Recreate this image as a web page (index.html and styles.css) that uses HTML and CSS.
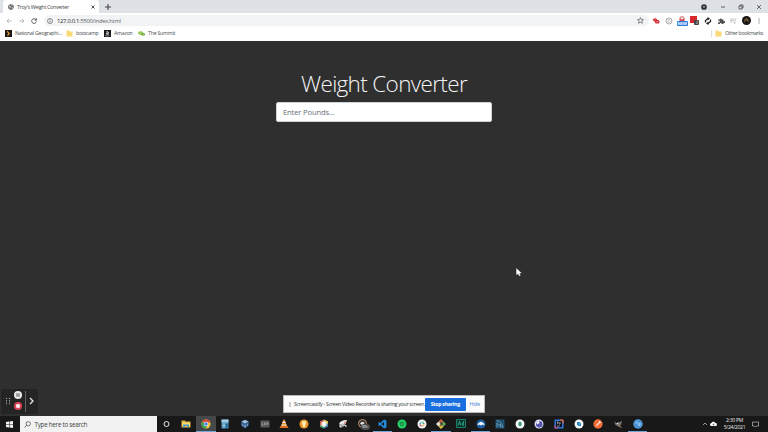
FILE: index.html
```html
<!DOCTYPE html>
<html lang="en">
<head>
<meta charset="utf-8">
<title>Troy's Weight Converter</title>
<link rel="stylesheet" href="styles.css">
</head>
<body>
<div class="screen">
  <header class="tabstrip">
    <div class="tab">
      <svg class="i6" viewBox="0 0 12 12"><circle cx="6" cy="6" r="5.6" fill="#505458"/><path d="M2 3l3 1 1 2-2 1v3M7 1l0 2 3 1M7 7l3 0-1 3z" fill="#d8dadc" stroke="#d8dadc" stroke-width=".8"/></svg>
      <span class="tab-title">Troy's Weight Converter</span>
      <svg class="i4" viewBox="0 0 8 8"><path d="M1 1l6 6M7 1L1 7" stroke="#333" stroke-width="1.7"/></svg>
    </div>
    <svg class="plus" viewBox="0 0 10 10"><path d="M5 0v10M0 5h10" stroke="#44474a" stroke-width="1.8"/></svg>
    <div class="window-buttons">
      <svg class="i6" viewBox="0 0 12 12"><circle cx="6" cy="6" r="5.7" fill="#303336"/><path d="M3.5 5h5L6 8z" fill="#dee1e6"/></svg>
      <svg class="i6" viewBox="0 0 12 12"><path d="M2 6h8" stroke="#333" stroke-width="1.5"/></svg>
      <svg class="i6" viewBox="0 0 12 12"><path d="M2 4h6v6H2zM4 4V2h6v6H8" fill="none" stroke="#333" stroke-width="1.4"/></svg>
      <svg class="i6" viewBox="0 0 12 12"><path d="M2 2l8 8M10 2l-8 8" stroke="#333" stroke-width="1.4"/></svg>
    </div>
  </header>
  <nav class="toolbar">
    <div class="nav-buttons">
      <svg class="i6" viewBox="0 0 12 12"><path d="M11 6H2M6 2L2 6l4 4" fill="none" stroke="#a0a2a4" stroke-width="1.4"/></svg>
      <svg class="i6" viewBox="0 0 12 12"><path d="M1 6h9M6 2l4 4-4 4" fill="none" stroke="#a0a2a4" stroke-width="1.4"/></svg>
      <svg class="i6" viewBox="0 0 12 12"><path d="M10 3.5A4.7 4.7 0 1 0 10.7 7" fill="none" stroke="#44474a" stroke-width="1.7"/><path d="M11.5 0v5h-5z" fill="#44474a"/></svg>
    </div>
    <div class="address">
      <svg class="i6" viewBox="0 0 12 12"><circle cx="6" cy="6" r="5" fill="none" stroke="#55585c" stroke-width="1.3"/><path d="M6 5.2V9M6 2.8v1.4" stroke="#55585c" stroke-width="1.4"/></svg>
      <span class="url"><b>127.0.0.1</b>:5500/index.html</span>
      <svg class="star" viewBox="0 0 12 12"><path d="M6 1l1.5 3.3 3.6.4-2.7 2.4.8 3.6L6 8.9l-3.2 1.8.8-3.6L.9 4.7l3.6-.4z" fill="none" stroke="#55585c" stroke-width="1.2"/></svg>
    </div>
    <div class="extensions">
      <svg viewBox="0 0 16 16"><path d="M1 5l5-3 4 2v5l-4 1-3-2z" fill="#d9484e"/><rect x="6" y="6" width="9" height="7" rx="3" fill="#d9252c"/><path d="M9 9.500h3" stroke="#fff" stroke-width="1.500"/></svg>
      <svg viewBox="0 0 16 16"><circle cx="8" cy="8" r="6" fill="none" stroke="#85888b" stroke-width="1.4"/><path d="M7 5H6v6h1M9 5h1v6H9" fill="none" stroke="#85888b"/></svg>
      <span class="ext-new"><svg viewBox="0 0 16 12"><path d="M2 4h12v8H2z" fill="#d9444b"/><path d="M5 4V1h6v3" fill="none" stroke="#b66" stroke-width="1.5"/><path d="M5 5h6v3H5z" fill="#fff"/></svg><i>NEW</i></span>
      <span class="ext-red"><i>2</i></span>
      <svg viewBox="0 0 16 16"><path d="M3 11V7l5-4M13 5v4l-5 4" fill="none" stroke="#222" stroke-width="2.600"/><path d="M7 0l5 3-5 4zM9 9l-5 4 5 3z" fill="#222"/></svg>
      <svg viewBox="0 0 16 16"><path d="M2 5h3.5a2 2 0 1 1 4 0H13v3.5a2 2 0 1 1 0 3V14H9.500a2 2 0 1 0-4 0H2v-3.500a2 2 0 1 0 0-3z" fill="#4d5053"/></svg>
      <svg viewBox="0 0 16 16"><path d="M2 4h8M2 7h8M2 10h5M12 12V4h3" fill="none" stroke="#b4b7ba" stroke-width="1.5"/><circle cx="11" cy="12" r="1.6" fill="#b4b7ba"/></svg>
      <svg class="avatar" viewBox="0 0 18 18"><circle cx="9" cy="9" r="9" fill="#171614"/><path d="M5 14V7l4-3 4 3v7l-2-4H7z" fill="#876642"/><path d="M7 8h4" stroke="#241b15" stroke-width="2"/></svg>
      <svg viewBox="0 0 16 16"><path d="M8 3v2M8 7v2M8 11v2" stroke="#55585c" stroke-width="2"/></svg>
    </div>
  </nav>
  <nav class="bookmarks">
    <span class="bm bm-geo"><svg viewBox="0 0 14 14"><path d="M0 0h14v14H0z" fill="#1c1917"/><path d="M4 1l6 6-5 6V9l2-2-3-3z" fill="#e9a23a"/></svg><span>National Geographi...</span></span>
    <span class="bm bm-boot"><svg viewBox="0 0 14 14"><path d="M1 1h5l1 2h6v10H1z" fill="#fbd976"/></svg><span>bootcamp</span></span>
    <span class="bm bm-amz"><svg viewBox="0 0 14 14"><path d="M0 0h14v14H0z" fill="#17191d"/><path d="M4.500 4q3-2 4 0v5M8 6q-4 0-3.500 2T8 8" fill="none" stroke="#fff" stroke-width="1.6"/><path d="M2 11q5 2 9 0" fill="none" stroke="#ddd"/></svg><span>Amazon</span></span>
    <span class="bm bm-sum"><svg viewBox="0 0 14 14"><ellipse cx="5" cy="6" rx="5" ry="3.600" fill="#8ac249"/><ellipse cx="10" cy="8.500" rx="4" ry="3" fill="#6dac35"/><path d="M3 6h4M9 9h3" stroke="#e4f4d4"/></svg><span>The Summit</span></span>
    <span class="bm bm-other"><svg viewBox="0 0 14 14"><path d="M1 1h5l1 2h6v10H1z" fill="#fbd976"/></svg><span>Other bookmarks</span></span>
  </nav>

  <main class="page">
    <h1>Weight Converter</h1>
    <input class="pounds" type="text" placeholder="Enter Pounds...">
    <div class="recorder">
      <svg class="grip" viewBox="0 0 4 7"><path d="M.5 0v7M3.500 0v7" stroke="#bbb" stroke-dasharray="1 1.200"/></svg>
      <div class="rec-buttons">
        <svg viewBox="0 0 16 16"><circle cx="8" cy="8" r="8" fill="#e9e9e9"/><path d="M6 4.500v7M10 4.500v7" stroke="#444" stroke-width="1.800"/></svg>
        <svg viewBox="0 0 16 16"><circle cx="8" cy="8" r="8" fill="#d64550"/><rect x="4.500" y="4.500" width="7" height="7" fill="#fff"/></svg>
      </div>
      <svg class="rec-next" viewBox="0 0 5 8"><path d="M1 1l3 3-3 3" fill="none" stroke="#e4e4e4" stroke-width="1.300"/></svg>
    </div>
    <div class="share">
      <i class="share-grip"></i>
      <span class="share-text">Screencastify - Screen Video Recorder is sharing your screen.</span>
      <button>Stop sharing</button>
      <a>Hide</a>
    </div>
    <svg class="cursor" viewBox="0 0 6 9"><path d="M.5.5v6.300l1.600-1.400 1 2.400 1.200-.5-1-2.300h2z" fill="#fff" stroke="#fff" stroke-width=".3"/></svg>
  </main>

  <footer class="taskbar">
    <div class="start"><svg viewBox="0 0 14 14"><path d="M0 2l6-1v5.500H0zM7 .9L14 0v6.500H7zM0 7.500h6V13l-6-1zM7 7.500h7V14l-7-.9z" fill="#f2f2f2"/></svg></div>
    <div class="search"><svg viewBox="0 0 14 14"><circle cx="8.500" cy="5.500" r="4.300" fill="none" stroke="#333" stroke-width="1.300"/><path d="M5.500 8.500L1 13" stroke="#333" stroke-width="1.300"/></svg><span>Type here to search</span></div>
    <div class="apps">
      <span><svg viewBox="0 0 20 20"><circle cx="9" cy="10" r="5" fill="none" stroke="#e8e8e8" stroke-width="2"/></svg></span>
      <span><svg viewBox="0 0 20 20"><path d="M1 3h7l1 2h10v12H1z" fill="#e7b13d"/><path d="M2 7h16v7H2z" fill="#fbd96e"/><path d="M4 17v-6h12v6h-3v-3H7v3z" fill="#4497cf"/></svg></span>
      <span class="active open"><svg viewBox="0 0 20 20"><circle cx="10" cy="10" r="9" fill="#f4c63c"/><path d="M10 10L2 6a9 9 0 0 1 16 0z" fill="#dc473b"/><path d="M10 10L2 6a9 9 0 0 0 7 13l4-7z" fill="#35a257"/><circle cx="10" cy="10" r="4.500" fill="#fff"/><circle cx="10" cy="10" r="3.500" fill="#477fe1"/></svg></span>
      <span><svg viewBox="0 0 20 20"><path d="M3 1h14v18H3z" fill="#478dbb"/><path d="M3 1h14v6H3z" fill="#a3cbe1"/><path d="M5 10h5M5 13h5M5 16h5" stroke="#cae1ed" stroke-width="1.500"/><path d="M12 10h3v7h-3z" fill="#246391"/></svg></span>
      <span><svg viewBox="0 0 20 20"><path d="M2 5l8-4 8 4v8l-8 6-8-6z" fill="#274e80"/><path d="M3 5l7 4 7-4-7-3z" fill="#a9c3de"/><path d="M10 9v9M5 9v4l5 2 5-2V9" fill="none" stroke="#8fb0d2" stroke-width="1.600"/></svg></span>
      <span><svg viewBox="0 0 20 20"><path d="M1 3h18v14H1z" fill="#595959"/><path d="M4 7v5h3M9 7v5M12 12V8h4v4" fill="none" stroke="#b8b8b8" stroke-width="1.300"/></svg></span>
      <span><svg viewBox="0 0 20 20"><path d="M9 1h2l5 13H4z" fill="#ed8f2b"/><path d="M7.500 5h5l1 3h-7zM5.500 11h9l1 2h-11z" fill="#eee"/><path d="M3 14h14l2 4H1z" fill="#dc711d"/></svg></span>
      <span><svg viewBox="0 0 20 20"><circle cx="10" cy="10" r="9" fill="#eb982c"/><circle cx="10" cy="8" r="4.500" fill="#ffe6a9"/><path d="M8 12h4v4H8z" fill="#fff0c9"/></svg></span>
      <span><svg viewBox="0 0 20 20"><path d="M10 1l8 4v10l-8 4-8-4V5z" fill="#4a86b8"/><path d="M2 5l8-4v5L6 9v8l-4-2z" fill="#d75a50"/><path d="M10 1l8 4v5l-8-4z" fill="#e3c44d"/><path d="M2 12l8 3v4l-8-4z" fill="#4aa868"/><path d="M10 4l5 3v6l-5 3-5-3V7z" fill="#f2f2ee"/></svg></span>
      <span><svg viewBox="0 0 20 20"><path d="M2 10Q5 2 18 2l-3 8-6 2z" fill="#eee"/><path d="M2 11l7-2 5 2-4 5z" fill="#b7bcc2"/><path d="M11 8l5-3-2 5z" fill="#d45350"/><path d="M3 13l4 4M13 12l4 3" stroke="#f3f3f3" stroke-width="2.500"/></svg></span>
      <span class="badged"><svg viewBox="0 0 20 20"><circle cx="9" cy="9" r="8" fill="#3b302a" stroke="#b79278" stroke-width="2"/><path d="M4 9q4-6 9-1l-3 6z" fill="#ddd"/></svg><i>99+</i></span>
      <span class="open"><svg viewBox="0 0 20 20"><path d="M14 1l5 2v14l-5 2L2 8l2-2 10 8V6L4 14l-2-2z" fill="#2389d7"/></svg></span>
      <span><svg viewBox="0 0 20 20"><circle cx="10" cy="10" r="9" fill="#24d265"/><path d="M5 7q6-2 10 1M5.500 10q5-1.500 9 1M6 13q4-1 7 1" fill="none" stroke="#17743c" stroke-width="1.700"/></svg></span>
      <span><svg viewBox="0 0 20 20"><circle cx="10" cy="10" r="9" fill="#f4f4f4"/><path d="M8 5v4H5" stroke="#45b8d9" stroke-width="2" fill="none"/><path d="M12 5v4h3" stroke="#35aa78" stroke-width="2" fill="none"/><path d="M5 12h3v3" stroke="#d6305f" stroke-width="2" fill="none"/><path d="M12 15v-3h3" stroke="#e2ac31" stroke-width="2" fill="none"/></svg></span>
      <span class="open"><svg viewBox="0 0 20 20"><path d="M10 0l5 5-5 5-5-5z" fill="#d86b48"/><path d="M5 5l5 5-5 5-5-5z" fill="#e5e0cd"/><path d="M15 5l5 5-5 5-5-5z" fill="#61a65b"/><path d="M10 10l5 5-5 5-5-5z" fill="#e8c44b"/><path d="M10 5v10M10 8l4 3" stroke="#2b3030" stroke-width="2"/></svg></span>
      <span><svg viewBox="0 0 20 20"><path d="M1 1h18v16H1z" fill="#0b332d" stroke="#1c9e7c" stroke-width="1.500"/><path d="M4 13l3-9 3 9M5 10h4M15 7q-3 0-3 3t3 3M15 4v9" fill="none" stroke="#31b691" stroke-width="1.400"/></svg></span>
      <span class="open"><svg viewBox="0 0 20 20"><circle cx="10" cy="10" r="9" fill="#205d9b"/><path d="M3 13q0-5 4-6 3-3 6 0 4 1 4 6l-4-2-3 2-3-2z" fill="#eef7fd"/></svg></span>
      <span><svg viewBox="0 0 20 20"><path d="M1 1h18v18H1z" fill="#20516f"/><path d="M3 3q10 1 13 14l-3-2M4 17V8l4 5 3-3v7" fill="none" stroke="#72a8c3" stroke-width="1.500"/></svg></span>
      <span><svg viewBox="0 0 20 20"><circle cx="10" cy="10" r="9" fill="#f4f7f4"/><path d="M10 5l3 2.500v5L10 15l-3-2.500v-5z" fill="#299b62"/></svg></span>
      <span><svg viewBox="0 0 20 20"><circle cx="10" cy="10" r="9" fill="#dcdcf6"/><circle cx="10.500" cy="10.500" r="6.500" fill="#5454ac"/><path d="M4 7q2-3 6-3l1 4-4 3z" fill="#eeeefd"/></svg></span>
      <span><svg viewBox="0 0 20 20"><path d="M1 1h8l10 1v17H1z" fill="#3477db"/><path d="M11 1h8v9z" fill="#df704e"/><path d="M1 12l8 7H1z" fill="#b54b86"/><path d="M4 4h12v12H4z" fill="#10111b"/><path d="M6 6h3M7.500 6v4M12 6v4h-2M6 14h5" fill="none" stroke="#fff" stroke-width="1.200"/></svg></span>
      <span><svg viewBox="0 0 20 20"><circle cx="10" cy="10" r="9" fill="#f2f7fb"/><path d="M6 6h5l3 3v5H9l-3-3z" fill="#2b82bd"/><path d="M9 9h3v3z" fill="#67bddc"/></svg></span>
      <span><svg viewBox="0 0 20 20"><circle cx="10" cy="10" r="9.300" fill="#f36c38"/><path d="M5 15l2-4 6-6 2 2-6 6z" fill="#fbd8c8"/><path d="M12 4l4 4" stroke="#fff" stroke-width="2"/></svg></span>
      <span><svg viewBox="0 0 20 20"><path d="M2 5l5 3 6-2 5-2-2 8-5 3-6-3z" fill="#77736c"/><circle cx="9" cy="9" r="1.600" fill="#eee"/><path d="M10 13l7 4" stroke="#b18e69" stroke-width="2"/></svg></span>
      <span class="open"><svg viewBox="0 0 20 20"><circle cx="10" cy="10" r="9.500" fill="#519bdd"/><path d="M4 6q3-3 6-2l-1 4-3 2zM10 9l5-2 2 3-3 5-3-2z" fill="#91c5ef"/><circle cx="10" cy="10" r="6" fill="none" stroke="#3477b6"/></svg></span>
    </div>
    <div class="tray">
      <svg viewBox="0 0 12 12"><path d="M2 8l4-4 4 4" fill="none" stroke="#ddd" stroke-width="1.300"/></svg>
      <svg class="cloud" viewBox="0 0 14 12"><path d="M3 10a3 3 0 0 1 0-6 4 4 0 0 1 7.500 0A3 3 0 0 1 11 10z" fill="#fff"/><path d="M7 9V6M5.500 7L7 5.500 8.500 7" fill="none" stroke="#222" stroke-width="1.200"/></svg>
      <div class="clock"><span>2:30 PM</span><span>5/24/2021</span></div>
      <svg class="note" viewBox="0 0 14 14"><path d="M1 2h12v8H9l-2 2-2-2H1z" fill="none" stroke="#ddd" stroke-width="1.200"/></svg>
    </div>
  </footer>
</div>
</body>
</html>
```

FILE: styles.css
```css
* { box-sizing: border-box; }
body { margin: 0; overflow: hidden; font-family: "Open Sans", "Noto Sans", sans-serif; }
svg { display: block; flex: none; }
i { font-style: normal; }
.screen { width: 768px; height: 432px; display: grid; grid-template-rows: 13px 15px 13px 375px 16px; background: #2f2f2f; }
.i6 { width: 6px; height: 6px; }
.i4 { width: 4px; height: 4px; }

.tabstrip { display: flex; align-items: center; background: #dee1e6; }
.tab { width: 96px; height: 13px; margin-left: 3px; padding: 0 4px 0 5px; display: flex; align-items: center; gap: 3px; background: #fff; border-radius: 3px 3px 0 0; }
.tab-title { flex: 1; font-size: 5.3px; line-height: 14px; letter-spacing: -.32px; color: #45484b; white-space: nowrap; }
.plus { width: 6px; height: 6px; margin-left: 6px; }
.window-buttons { margin-left: auto; margin-right: 6px; display: flex; gap: 12.2px; }

.toolbar { display: flex; align-items: center; background: #fff; }
.nav-buttons { width: 44px; padding-left: 6px; display: flex; gap: 6.5px; }
.address { width: 605px; height: 11px; padding: 0 5px 0 3px; display: flex; align-items: center; gap: 4px; background: #f1f3f4; border-radius: 6px; }
.url { flex: 1; font-size: 5.8px; line-height: 12px; letter-spacing: -.26px; color: #606366; white-space: nowrap; }
.url b { font-weight: 400; color: #25282b; }
.star { width: 7px; height: 7px; }
.extensions { flex: 1; padding-left: 1px; display: grid; grid-template-columns: repeat(9, 12.85px); justify-items: center; align-items: center; }
.extensions svg { width: 8px; height: 8px; }
.extensions .avatar { width: 9px; height: 9px; }
.ext-new { width: 11px; height: 10px; display: flex; flex-direction: column; align-items: center; }
.extensions .ext-new svg { width: 8px; height: 5px; }
.ext-new i { width: 11px; height: 5px; background: #2c7be0; color: #fff; border-radius: 1px; font: 700 4px/5px "Open Sans", sans-serif; text-align: center; }
.ext-red { width: 9px; height: 9px; padding: 4px 0 0 4px; background: linear-gradient(#d8282c, #d8282c) 0 0 / 7px 7px no-repeat; }
.ext-red i { display: block; width: 5px; height: 5px; background: #444; color: #fff; border-radius: 1px; font-size: 4px; line-height: 5px; text-align: center; }

.bookmarks { display: flex; align-items: center; padding: 0 0 2px 5px; background: #fff; }
.bm { display: flex; align-items: center; gap: 3px; font-size: 5.3px; line-height: 11px; letter-spacing: -.26px; color: #4c4f52; white-space: nowrap; }
.bm svg { width: 7px; height: 7px; }
.bm-geo { width: 61px; }
.bm-boot { width: 38px; letter-spacing: -.35px; }
.bm-amz { width: 34px; }
.bm-other { margin-left: auto; padding-right: 5px; letter-spacing: -.36px; }
.bm-other::before { content: ""; width: 1px; height: 7px; background: #ddd; }

.page { position: relative; display: flex; flex-direction: column; align-items: center; background: #2f2f2f; }
h1 { margin: 28px 0 0; font-size: 22.5px; line-height: 30px; font-weight: 300; letter-spacing: -.65px; color: #f5f5f5; white-space: nowrap; }
.pounds { width: 216px; height: 20px; margin: 3px 0 0; padding: 0 6px; border: 1px solid #ced4da; border-radius: 2px; background: #fff; font: 7.6px "Open Sans", sans-serif; letter-spacing: -.14px; outline: none; }
.pounds::placeholder { color: #697077; opacity: 1; }
.recorder { position: absolute; left: 1px; bottom: 2px; width: 37px; height: 25px; display: flex; align-items: center; padding-left: 5px; background: #242424; border-radius: 2px; }
.grip { width: 4px; height: 7px; }
.rec-buttons { width: 16px; height: 21px; padding-left: 4px; display: flex; flex-direction: column; justify-content: flex-start; gap: 3px; border-right: 1px solid #626262; }
.rec-buttons svg { width: 8px; height: 8px; }
.rec-next { width: 5px; height: 8px; margin: -2px 0 0 3px; }
.share { position: absolute; left: 283px; bottom: 3px; width: 202px; height: 18px; display: flex; align-items: center; padding: 0 4px 0 5px; background: #fbfbfb; border: 1px solid #bbb; white-space: nowrap; }
.share-grip { width: 2px; height: 5px; margin-right: 3px; background: #ccc; }
.share-text { width: 132px; font-size: 5.2px; letter-spacing: -.255px; color: #36393c; }
.share button { width: 41px; height: 13px; padding: 0; border: 0; border-radius: 1px; background: #1a6fe0; color: #fff; font: 700 5.2px "Open Sans", sans-serif; letter-spacing: -.28px; }
.share a { margin-left: 4px; font-size: 5.2px; letter-spacing: -.2px; color: #4383d8; }
.cursor { position: absolute; left: 516px; top: 227px; width: 6px; height: 9px; }

.taskbar { display: flex; background: #181818; }
.start { width: 19.5px; display: flex; align-items: center; justify-content: center; }
.start svg { width: 7px; height: 7px; }
.search { width: 137.2px; display: flex; align-items: center; gap: 4px; padding-left: 4px; background: #f2f2f2; color: #444; font-size: 6.3px; letter-spacing: -.28px; white-space: nowrap; }
.search svg { width: 7px; height: 7px; }
.apps { display: grid; grid-template-columns: repeat(25, 19.63px); }
.apps > span { height: 16px; display: flex; justify-content: center; align-items: center; }
.apps svg { width: 10px; height: 10px; }
.apps .active { background: #454749; }
.apps .open { box-shadow: inset 0 -1px #6fa8d8; }
.apps .badged { position: relative; }
.badged i { position: absolute; left: 8px; bottom: 2px; width: 9px; height: 6px; border-radius: 3px; background: #494949; color: #fff; font-size: 4px; line-height: 6px; text-align: center; }
.tray { margin-left: auto; margin-right: 9px; display: flex; align-items: center; }
.tray svg { width: 6px; height: 6px; }
.tray .cloud { width: 7px; height: 6px; margin-left: 2px; }
.clock { width: 29px; margin: 0 3px; display: flex; flex-direction: column; align-items: center; color: #e8e8e8; font-size: 5.1px; line-height: 7px; letter-spacing: -.28px; }
.tray .note { width: 7px; height: 7px; }
```
